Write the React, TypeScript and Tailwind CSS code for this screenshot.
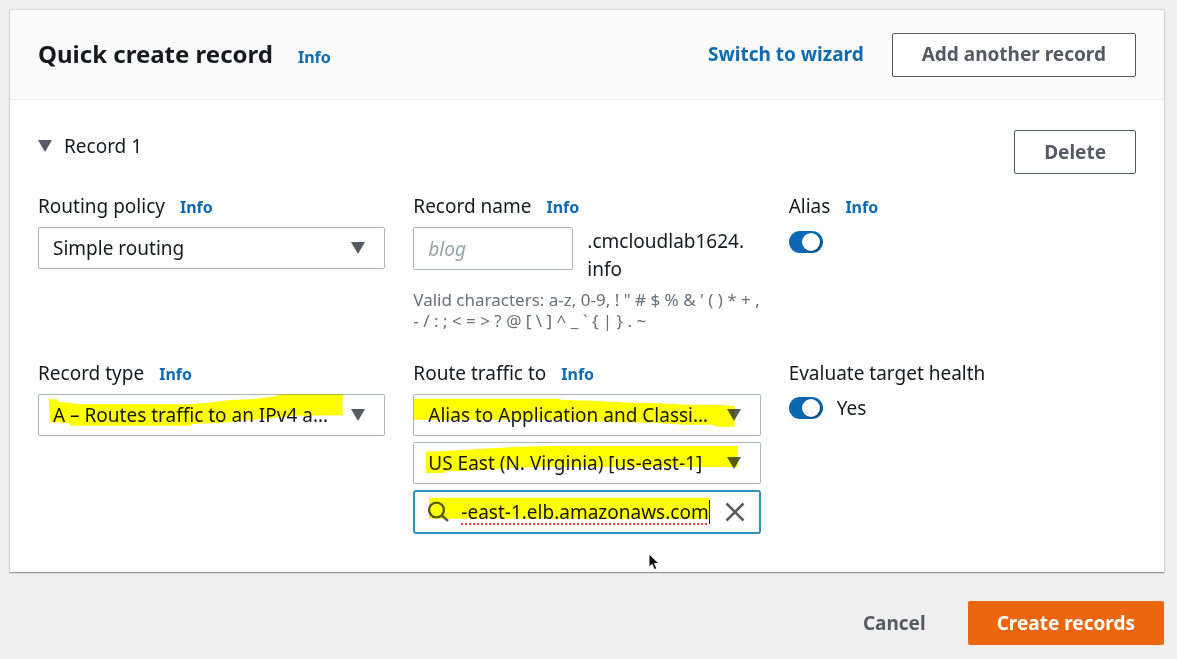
import type { ReactNode } from "react";
import { useState } from "react";

const selectClass =
  "block h-[42px] w-full appearance-none truncate rounded-[2px] border border-[#aab7b8] bg-white pr-11 pl-[14px] text-[19px] text-[#16191f] outline-none";

const outlineButton =
  "h-11 rounded-[2px] border border-[#545b64] bg-white px-[29px] text-[19px] font-bold text-[#545b64]";

function Info() {
  return (
    <a href="#info" className="text-[16px] leading-7 font-bold text-[#0f6bb0]">
      Info
    </a>
  );
}

function Caret() {
  return (
    <svg viewBox="0 0 14 12" className="h-3 w-[14px] shrink-0" aria-hidden="true">
      <path d="M0 0H14L7 12Z" fill="#545b64" />
    </svg>
  );
}

function Marker({ points }: { points: string }) {
  return (
    <svg
      viewBox="0 0 1041 126"
      className="pointer-events-none absolute top-0 left-0 h-[42px] w-[347px] mix-blend-multiply"
      aria-hidden="true"
    >
      <polygon points={points} fill="#ffff00" />
    </svg>
  );
}

function FieldLabel({ id, text, info }: { id: string; text: string; info?: boolean }) {
  return (
    <div className="mb-[6px] flex items-baseline gap-[15px]">
      <label htmlFor={id} className="text-[19px] leading-7">
        {text}
      </label>
      {info && <Info />}
    </div>
  );
}

function Select({
  id,
  option,
  label,
  marker,
}: {
  id: string;
  option: string;
  label?: string;
  marker?: string;
}) {
  return (
    <div className="relative">
      <select id={id} aria-label={label} className={selectClass}>
        <option>{option}</option>
      </select>
      <div className="pointer-events-none absolute inset-y-0 right-5 flex items-center">
        <Caret />
      </div>
      {marker && <Marker points={marker} />}
    </div>
  );
}

function Toggle({ id, children }: { id: string; children?: ReactNode }) {
  return (
    <div className="flex h-[30px] items-center gap-[14px]">
      <input
        id={id}
        type="checkbox"
        role="switch"
        defaultChecked
        className="h-[22px] w-[34px] appearance-none rounded-full bg-[#0a67b2] before:mt-[2px] before:ml-[13px] before:block before:size-[18px] before:rounded-full before:bg-white before:shadow-[1px_1px_1px_rgba(0,0,0,0.4)]"
      />
      {children}
    </div>
  );
}

export default function App() {
  const [target, setTarget] = useState("-east-1.elb.amazonaws.com");

  return (
    <div className="min-h-screen bg-[#efefef] pt-[10px] pr-[13px] pb-[14px] pl-[10px] font-['Noto_Sans',sans-serif] text-[#16191f]">
      <main className="relative bg-white shadow-[0_1px_1px_0_#8d9aa0,0_0_1px_1px_#d9dcdd]">
        <header className="flex h-[90px] items-center justify-between border-b border-[#eaeded] bg-[#fafafa] px-7">
          <div className="flex items-baseline gap-[25px]">
            <h1 className="text-[24px] leading-8 font-bold">Quick create record</h1>
            <Info />
          </div>
          <div className="flex items-center gap-7">
            <a href="#wizard" className="text-[19px] font-bold text-[#0f6bb0]">
              Switch to wizard
            </a>
            <button type="button" className={outlineButton}>
              Add another record
            </button>
          </div>
        </header>

        <section className="px-7 pt-[30px] pb-[38px]">
          <div className="mb-[18px] flex items-start justify-between">
            <button type="button" className="flex items-center gap-3 text-[19px] leading-8">
              <Caret />
              Record 1
            </button>
            <button type="button" className={outlineButton}>
              Delete
            </button>
          </div>

          <div className="grid grid-cols-3 gap-7">
            <div>
              <FieldLabel id="policy" text="Routing policy" info />
              <Select id="policy" option="Simple routing" />
            </div>

            <div>
              <FieldLabel id="name" text="Record name" info />
              <div className="mb-[6px] flex items-start gap-[14px]">
                <input
                  id="name"
                  placeholder="blog"
                  className="h-[43px] w-40 rounded-[2px] border border-[#aab7b8] px-[14px] text-[19px] outline-none placeholder:text-[#95a5a6] placeholder:italic"
                />
                <div className="text-[19px] leading-7">
                  .cmcloudlab1624.
                  <br />
                  info
                </div>
              </div>
              <p className="text-[17px] leading-[21px] whitespace-nowrap text-[#687078]">
                Valid characters: a-z, 0-9, ! " # $ % &amp; ' ( ) * + ,
                <br />
                {"- / : ; < = > ? @ [ \\ ] ^ _ ` { | } . ~"}
              </p>
            </div>

            <div>
              <FieldLabel id="alias" text="Alias" info />
              <Toggle id="alias" />
            </div>

            <div>
              <FieldLabel id="type" text="Record type" info />
              <Select
                id="type"
                option="A – Routes traffic to an IPv4 a…"
                marker="32,16 57,16 60,24 90,26 125,31 450,31 510,26 570,19 650,15 700,8 735,1 914,1 914,64 770,65 640,78 540,87 460,90 460,95 98,95 95,88 36,84"
              />
            </div>

            <div>
              <FieldLabel id="endpoint" text="Route traffic to" info />
              <div className="flex flex-col gap-[6px]">
                <Select
                  id="endpoint"
                  option="Alias to Application and Classi…"
                  marker="2,14 443,14 443,18 540,20 650,26 740,28 820,32 910,32 965,36 965,98 910,98 900,92 810,92 720,86 600,84 540,82 443,77 2,77"
                />
                <Select
                  id="region"
                  label="Region"
                  option="US East (N. Virginia) [us-east-1]"
                  marker="38,29 90,27 165,23 235,19 300,15 410,12 974,12 974,75 390,75 300,78 235,82 165,86 95,88 95,93 38,93"
                />
                <div className="relative flex h-11 items-center rounded-[3px] border-2 border-[#2f95b5] bg-white pr-[14px] pl-3">
                  <svg viewBox="0 0 22 22" className="size-[22px] shrink-0" fill="none" stroke="#545b64" strokeWidth="2.4" aria-hidden="true">
                    <circle cx="9.5" cy="9" r="7.4" />
                    <path d="M14.8 14.3L21 20" />
                  </svg>
                  <input
                    aria-label="Load balancer"
                    value={target}
                    onChange={(event) => setTarget(event.target.value)}
                    className="ml-3 h-9 w-[248px] text-[19px] underline decoration-[#e0443a] decoration-dotted decoration-2 underline-offset-4 outline-none"
                  />
                  <span className="h-6 w-px bg-[#16191f]" aria-hidden="true" />
                  <button type="button" aria-label="Clear" className="ml-auto" onClick={() => setTarget("")}>
                    <svg viewBox="0 0 20 20" className="size-5" stroke="#545b64" strokeWidth="2.5" aria-hidden="true">
                      <path d="M1.5 1.5L18.5 18.5M18.5 1.5L1.5 18.5" />
                    </svg>
                  </button>
                  <Marker points="42,17 884,17 884,80 42,80" />
                </div>
              </div>
            </div>

            <div>
              <FieldLabel id="health" text="Evaluate target health" />
              <Toggle id="health">
                <span className="text-[19px]">Yes</span>
              </Toggle>
            </div>
          </div>
        </section>

        <svg viewBox="0 0 12 18" className="pointer-events-none absolute top-[543px] left-[638px] h-[18px] w-3" aria-hidden="true">
          <path
            d="M1 1V14.2L4.1 11.3L6.4 16.6L8.8 15.5L6.5 10.5H11Z"
            fill="#000"
            stroke="#fff"
            strokeWidth="1"
          />
        </svg>
      </main>

      <footer className="mt-[29px] flex items-center justify-end gap-[42px]">
        <button type="button" className="h-11 text-[19px] font-bold text-[#545b64]">
          Cancel
        </button>
        <button type="button" className="h-11 rounded-[2px] bg-[#ec6610] px-[29px] text-[19px] font-bold text-white">
          Create records
        </button>
      </footer>
    </div>
  );
}
